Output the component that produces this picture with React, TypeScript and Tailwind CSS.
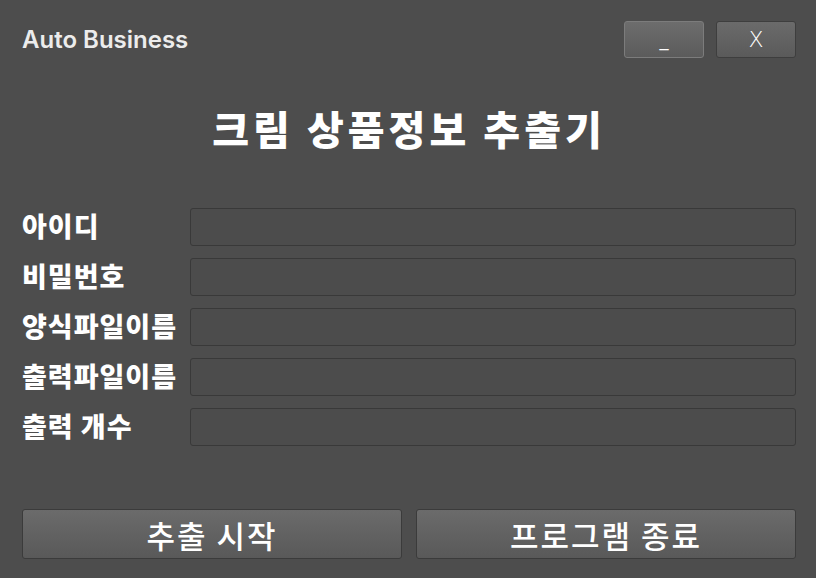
import React from "react";

const kr = { fontFamily: '"Noto Sans CJK KR", "Noto Sans", sans-serif' };

export default function App() {
  const labels = ["아이디", "비밀번호", "양식파일이름", "출력파일이름", "출력 개수"];
  return (
    <div className="w-[816px] h-[578px] bg-[#4d4d4d] flex flex-col pl-[22px] pr-[20px] overflow-hidden" style={kr}>
      <div className="mt-[21px] flex items-center justify-between h-[37px]">
        <div className="text-[24px] font-semibold text-[#ececec] leading-none" style={{ fontFamily: 'Inter, "Noto Sans", sans-serif' }}>
          Auto Business
        </div>
        <div className="flex gap-[12px] h-full">
          <button className="w-[80px] h-full rounded-[3px] border border-[#7c7c7c] bg-gradient-to-b from-[#6d6d6d] to-[#5b5b5b] text-white text-[18px] leading-none flex items-center justify-center pt-[1px]" style={{ fontFamily: '"DejaVu Sans", sans-serif' }}>
          _
          </button>
          <button className="w-[80px] h-full rounded-[3px] border border-[#3e3e3e] bg-gradient-to-b from-[#6b6b6b] to-[#5a5a5a] text-white text-[22px] leading-none flex items-center justify-center" style={{ fontFamily: '"DejaVu Sans", sans-serif', fontWeight: 300 }}>
          X
          </button>
        </div>
      </div>
      <div className="mt-[50px] text-center text-white font-extrabold text-[40px] leading-none tracking-[4px]">
        크림 상품정보 추출기
      </div>
      <div className="mt-[60px] flex flex-col gap-[12px]">
        {labels.map((l) => (
          <div key={l} className="flex items-center">
            <div className="w-[168px] text-white font-extrabold text-[27px] leading-none tracking-[1px] pb-[4px]">{l}</div>
            <div className="flex-1 h-[38px] rounded-[3px] border border-[#393939] bg-[#4c4c4c]" />
          </div>
        ))}
      </div>
      <div className="mt-auto mb-[19px] grid grid-cols-2 gap-[14px] h-[50px]">
        <button className="rounded-[3px] border border-[#3b3b3b] bg-gradient-to-b from-[#6b6b6b] to-[#595959] text-white text-[31px] leading-none tracking-[2px] font-medium" style={kr}>
          추출 시작
        </button>
        <button className="rounded-[3px] border border-[#3b3b3b] bg-gradient-to-b from-[#6b6b6b] to-[#595959] text-white text-[31px] leading-none tracking-[2px] font-medium" style={kr}>
          프로그램 종료
        </button>
      </div>
    </div>
  );
}
